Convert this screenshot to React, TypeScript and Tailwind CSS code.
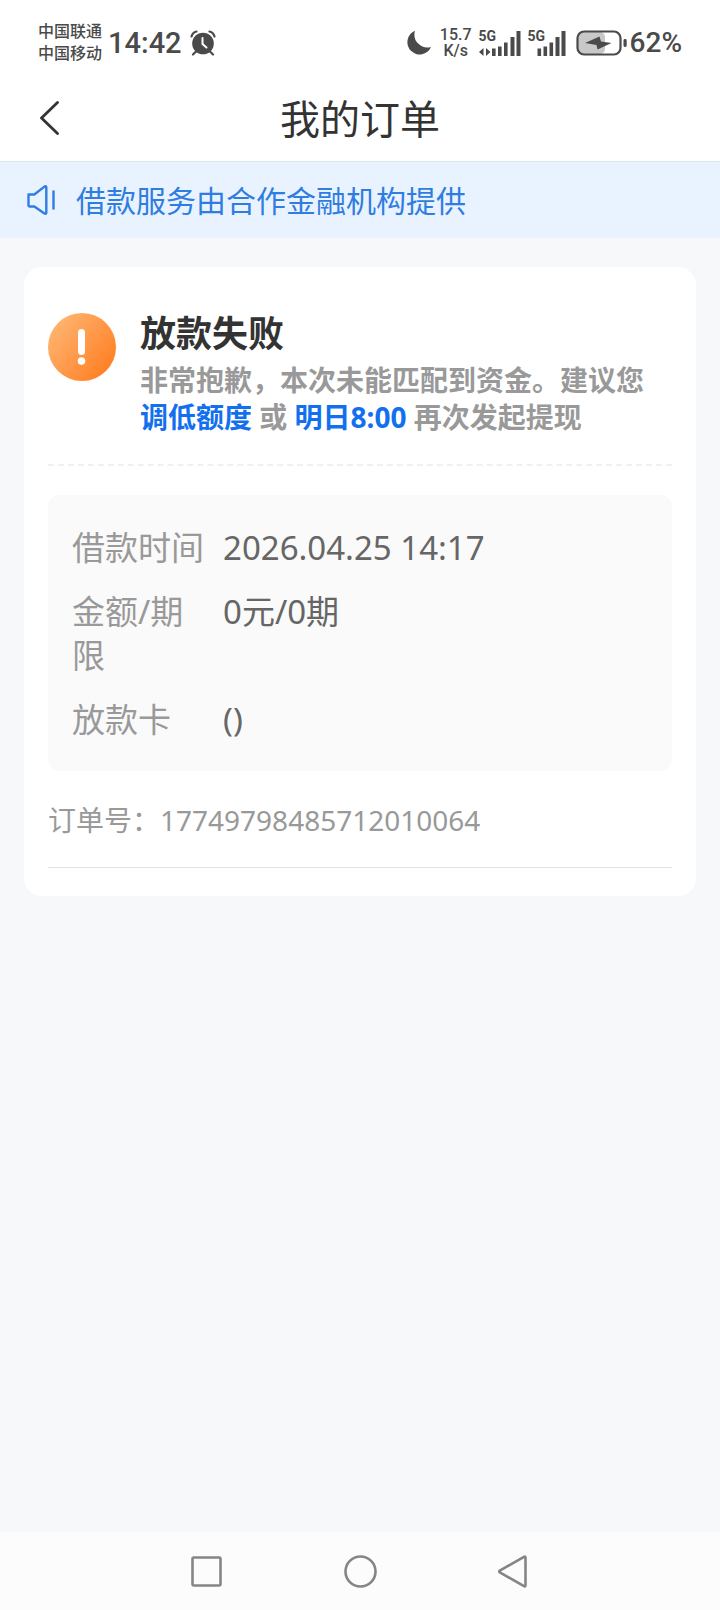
import type { ReactNode } from 'react';

const details = [
  { label: '借款时间', value: '2026.04.25 14:17' },
  { label: '金额/期限', value: '0元/0期' },
  { label: '放款卡', value: '()' },
];

export default function App() {
  return (
    <div className="flex min-h-screen flex-col bg-[#f6f8fa] font-['Noto_Sans','Noto_Sans_CJK_SC',sans-serif] text-[#333]">
      <StatusBar />

      <header className="grid h-[81px] grid-cols-[1fr_auto_1fr] items-center bg-white px-8 pb-1">
        <button type="button" aria-label="返回" className="flex size-9 items-center justify-center">
          <svg viewBox="0 0 36 36" className="size-9" fill="none" stroke="#333" strokeWidth="2.8">
            <path d="M25.5 1.5 9.5 17l16 15.5" strokeLinecap="round" strokeLinejoin="round" />
          </svg>
        </button>
        <h1 className="text-[40px] leading-[56px]">我的订单</h1>
      </header>

      {/* Notice */}
      <div className="flex h-[77px] items-center gap-5 border-t border-[#dbe6f0] bg-[#e9f3ff] px-[26px] text-[#2f7de1]">
        <svg viewBox="0 0 30 32" className="h-8 w-[30px]" fill="none" stroke="currentColor" strokeWidth="2.4">
          <path
            d="M2.5 10.5h5.8L18.5 2.6q1.8-1 1.8 1v24.8q0 2-1.8 1L8.3 22.5H4q-1.5 0-1.5-1.5Z"
            strokeLinejoin="round"
          />
          <path d="M27.5 7.5v17" strokeLinecap="round" />
        </svg>
        <p className="pt-0.5 text-[30px] leading-10">借款服务由合作金融机构提供</p>
      </div>

      <main className="flex-1 px-6 pt-[29px]">
        <section className="rounded-[18px] bg-white px-6 pt-[42px] pb-7">
          <div className="flex gap-6 border-b-2 border-dashed border-[#f0f0f0] pb-7">
            <svg viewBox="0 0 68 68" className="mt-1 size-[68px] shrink-0">
              <defs>
                <linearGradient id="warn" x1="0" y1="0.1" x2="1" y2="0.9">
                  <stop offset="0" stopColor="#ffb978" />
                  <stop offset="1" stopColor="#ff7a1c" />
                </linearGradient>
              </defs>
              <circle cx="34" cy="34" r="34" fill="url(#warn)" />
              <rect x="30" y="16" width="7" height="26" rx="3.5" fill="#fff" />
              <circle cx="33.5" cy="48" r="3.8" fill="#fff" />
            </svg>
            <div>
              <h2 className="text-[36px] leading-[50px] font-bold">放款失败</h2>
              <p className="mt-[3px] text-[28px] leading-[37px] font-bold text-[#999]">
                非常抱歉，本次未能匹配到资金。建议您
                <a href="#amount" className="text-[#1270ee]">调低额度</a> 或{' '}
                <span className="text-[#1270ee]">明日8:00</span> 再次发起提现
              </p>
            </div>
          </div>

          <dl className="mt-[29px] flex flex-col gap-5 rounded-xl bg-[#fafafa] px-6 pt-[31px] pb-[29px] text-[33px] leading-[44px]">
            {details.map((d) => (
              <div key={d.label} className="flex gap-[18px]">
                <dt className="w-[133px] shrink-0 text-[#999]">{d.label}</dt>
                <dd className="text-[#666]">{d.value}</dd>
              </div>
            ))}
          </dl>

          <p className="border-b border-[#e2e2e2] pt-[31px] pb-[29px] text-[28px] leading-9 text-[#999]">
            订单号：17749798485712010064
          </p>
        </section>
      </main>

      <nav className="flex h-[78px] items-center justify-center gap-[121px] bg-[#fcfcfc]">
        <NavButton label="最近任务">
          <rect x="2.5" y="2.5" width="28" height="28" rx="1.5" />
        </NavButton>
        <NavButton label="主屏幕">
          <circle cx="16.5" cy="16.5" r="15" />
        </NavButton>
        <NavButton label="返回上一级">
          <path d="M26 1.8q1.5-.8 1.5 1v27.400q0 1.800-1.500 1L1.800 17.400q-1.400-.900 0-1.800Z" strokeLinejoin="round" />
        </NavButton>
      </nav>
    </div>
  );
}

function NavButton({ label, children }: { label: string; children: ReactNode }) {
  return (
    <button type="button" aria-label={label}>
      <svg viewBox="0 0 33 33" className="size-[33px]" fill="none" stroke="#858585" strokeWidth="2.6">
        {children}
      </svg>
    </button>
  );
}

function StatusBar() {
  return (
    <div className="flex h-20 items-center justify-between bg-white px-[38px] pt-1.5 font-[Roboto,'Noto_Sans_CJK_SC',sans-serif] font-medium text-[#4a4a4a]">
      <div className="flex items-center">
        <div className="text-[16px] leading-[22px]">
          <div>中国联通</div>
          <div>中国移动</div>
        </div>
        <span className="ml-1.5 text-[29px] leading-8">14:42</span>
        {/* Alarm */}
        <svg viewBox="0 0 26 26" className="ml-2 size-[26px]" fill="none" stroke="currentColor">
          <circle cx="13" cy="13.5" r="10.8" fill="currentColor" stroke="none" />
          <path
            d="M1.5 6.5q1-4 5-5M24.5 6.5q-1-4-5-5M6 21.5l-3 3M20 21.5l3 3"
            strokeWidth="2.2"
            strokeLinecap="round"
          />
          <path d="M12.5 8v6l4 3.5" stroke="#fff" strokeWidth="2" strokeLinecap="round" />
        </svg>
      </div>

      <div className="flex items-center">
        {/* Do not disturb */}
        <svg viewBox="0 0 26 26" className="size-[26px]" fill="currentColor">
          <path d="M9 .800A12.300 12.300 0 1 0 25 17 13 13 0 0 1 9 .800Z" />
        </svg>
        <div className="ml-2 text-center text-[16px] leading-[16px]">
          <div>15.7</div>
          <div>K/s</div>
        </div>
        <Signal data />
        <Signal />
        {/* Battery */}
        <svg viewBox="0 0 52 26" className="ml-2.5 h-[26px] w-[52px]">
          <rect x="2" y="2" width="27" height="22" rx="5" fill="#c8c8c8" />
          <rect x="1.5" y="1.5" width="43" height="23" rx="6.5" fill="none" stroke="currentColor" strokeWidth="2.2" />
          <rect x="47.5" y="9" width="3.2" height="8" rx="1.4" fill="currentColor" />
          <path d="M9 13 23.500 6.500 25 11.500 35.500 13 21.500 19.500 20.500 15Z" fill="currentColor" />
        </svg>
        <span className="ml-0.5 text-[28px] leading-8">62%</span>
      </div>
    </div>
  );
}

function Signal({ data = false }: { data?: boolean }) {
  return (
    <div className="relative ml-[7px]">
      <span className="absolute top-[-2px] left-0 text-[14px] leading-4 font-bold">5G</span>
      {data ? (
        <svg viewBox="0 0 42 26" className="h-[26px] w-[42px]" fill="currentColor">
          <path d="M0 22l4.5-4v8ZM11.5 22l-4.5-4v8ZM13 18.5h3.6v7.5H13Z" />
          <path d="M19 16.5h3.6v9.5H19ZM25 12.5h3.6v13.5H25ZM31.5 7h4v19h-4ZM37.5 1h4v25h-4Z" />
        </svg>
      ) : (
        <svg viewBox="0 0 38 26" className="h-[26px] w-[38px]" fill="currentColor">
          <path d="M9.5 18.5h3.6v7.5H9.5ZM15.5 16.5h3.6v9.5h-3.6ZM21.5 12.5h3.6v13.5h-3.6ZM27.5 7h4v19h-4ZM33.5 1h4v25h-4Z" />
        </svg>
      )}
    </div>
  );
}
